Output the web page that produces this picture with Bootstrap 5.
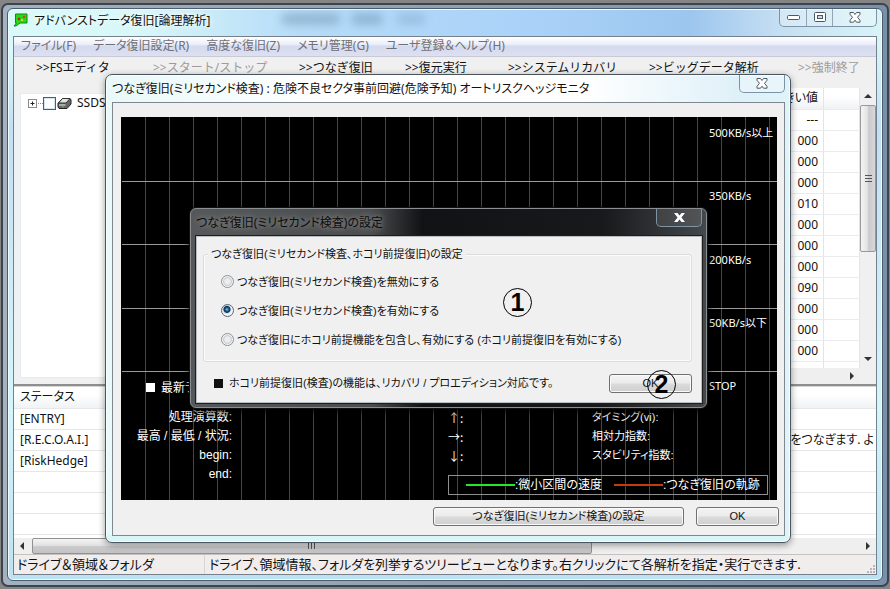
<!DOCTYPE html>
<html lang="ja">
<head>
<meta charset="utf-8">
<meta name="viewport" content="width=device-width, initial-scale=1">
<title>アドバンストデータ復旧[論理解析]</title>
<link rel="stylesheet" href="https://cdn.jsdelivr.net/npm/bootstrap@5.3.0/dist/css/bootstrap.min.css">
<style>
body{background:#858585;font:12px/20px "Noto Sans","Noto Sans CJK JP",sans-serif;font-feature-settings:"palt";color:#111;white-space:nowrap;overflow:hidden;padding:3px 1px 1px 1px}
.shell{background:linear-gradient(90deg,#a3b1c0,#8c9eb1 60%,#7990ab);border:2px solid #3c444d;border-radius:7px;padding:3px 4px 4px 4px}
.app-win{background:linear-gradient(180deg,transparent 40px,#c2dff3 120px,#d3f6fa 70%,#bce2f1),linear-gradient(90deg,#d9fafa,#d8f7f8 15%,#b6dcf8 33%,#a9d1f8 62%,#9cc6ee 78%,#c4def2 88%,#d9f4f7);border:1px solid #4d5c6b;box-shadow:inset 0 0 0 1px #eefcff;border-radius:6px;padding:0 5px 5px 5px}
.app-title{height:27px}
.app-title h1,.dlg-title h2{font-size:12px;line-height:20px;margin:0;font-weight:400}
.app-title h1{text-shadow:0 0 6px #fff,0 0 6px #fff;padding:2px 0 0 6px}
.smudge{width:145px;height:12px;margin-left:70px;border-radius:6px;background:linear-gradient(90deg,#31536f 0 55px,transparent 62px 68px,#31536f 74px 98px,transparent 104px 112px,#5d83a5 120px);filter:blur(4px);opacity:.25}
.caption-btns{border:1px solid #7d93a6;border-top:0;border-radius:0 0 5px 5px;height:18px;overflow:hidden;background:#ffffff44}
.caption-btns button{border:0;border-left:1px solid #8fa6b8;background:none;padding:0;width:26px;display:flex;align-items:center;justify-content:center}
.caption-btns button:first-child{border-left:0}
.caption-btns .close-cell{width:44px}
.client{background:#f0f0f0;border:1px solid #74818d}
.menu-strip{height:20px;background:linear-gradient(#fff 0,#eceffa 38%,#d6daee 48%,#dce0f2);border-bottom:1px solid #c8cbd6;padding-left:7px;gap:17px}
.menu-strip a{color:#6f7075;text-decoration:none;line-height:18px}
.tool-strip{height:31px;padding:1px 0 0 22px;display:grid;grid-template-columns:117fr 146fr 106fr 103fr 141fr 149fr 78fr}
.tool-strip button{border:0;background:none;padding:0;text-align:left;line-height:20px;height:20px;color:#111}
.tool-strip button:disabled{color:#9c9c9c}
.upper{height:296px}
.tree{background:#fff;width:45%;margin:5px 0 6px 6px;padding:3px 7px;border:1px solid #e3ebf5}
.tree-node{height:12px}
.tree input{appearance:none;width:13px;height:13px;border:1px solid #2c62a8;background:#fff;margin:0 1px 0 0;flex:none;box-shadow:inset 0 0 0 1px #d5e3f3}
.tree label{margin-left:5px}
.vals{background:#fff;border-collapse:collapse;width:100%}
.vals-box{flex:1 1 0;overflow:hidden}
.vals th,.vals td{font-weight:400;line-height:20px;height:21px;padding:0 5px 0 0;text-align:right;border-bottom:1px solid #e9ebee;border-right:1px solid #e1e4e8}
.vals thead th{background:linear-gradient(#fff 40%,#f0f1f3)}
.vals .rest{width:36px}
.vbar{width:16px;background:#f0f0f0;padding-bottom:16px}
.end-arrow{height:17px}
.thumb-v{height:147px;border:1px solid #989898;border-radius:2px;background:linear-gradient(90deg,#f4f4f4,#e3e3e3 45%,#cbcbcd 55%,#d7d7d9)}
.arrow{display:flex;align-items:center;justify-content:center}
.hbar{height:16px;background:#efefef}
.split{height:3px;background:#8e8e8e;border-bottom:1px solid #d6d6d6}
.log-box{background:#fff;padding-bottom:3px}
.log{border-collapse:collapse;width:100%}
.log th,.log td{font-weight:400;height:21px;line-height:20px;padding:0 2px 0 6px;border-bottom:1px solid #e7e7e7}
.log thead th{background:linear-gradient(#fff 35%,#f1f2f4)}
.thumb-h{margin-left:1px;flex:0 0 65%;border:1px solid #919191;border-radius:2px;background:linear-gradient(#f4f4f4,#e2e2e2 45%,#c9c9cb 55%,#c4c4c6)}
.status-strip{height:20px;background:#f2eded;border-top:1px solid #c5c1c1;line-height:18px;font-size:13px}
.status-strip .first{width:191px;padding-left:3px;border-right:1px solid #d9d5d5}

.dlg{position:absolute}
.dlg-monitor{left:105px;right:99px;top:74px;background:linear-gradient(90deg,#e9f8f8,#fff 30%,#fff 70%,#dff1f8 92%,#e0f3f8);border:1px solid #4b5560;border-radius:7px;padding:0 5px 6px 6px;box-shadow:0 2px 7px #0006,inset 0 0 0 1px #f4ffff,inset 0 -7px 0 #d9f5f7}
.dlg-title{height:27px}
.dlg-monitor .pane{background:#f0f0f0;border:1px solid #7d8890;padding:14px 7px 9px 8px}
.chart{background:linear-gradient(90deg,#454545 1px,transparent 1px) 23px 0/24px 100%,#000;border-left:1px solid #000;color:#fff;font-family:"Liberation Sans","Noto Sans CJK JP",sans-serif;padding-top:1px;height:383px}
.chart .band{height:64px;margin-bottom:-1px;border-bottom:1px solid #9a9a9a;padding-top:5px}
.chart .band:nth-child(even){margin-bottom:0}
.speed{width:68px;margin-left:auto;font-family:"Noto Sans","Noto Sans CJK JP",sans-serif;font-size:11px}
.latest{padding:6px 0 0 24px}
.latest i{width:9px;height:9px;background:#fff;display:inline-block;margin-right:6px}
.grid-info{display:grid;grid-template-columns:110px 216px 144px 1fr;line-height:19px;margin-top:10px}
.grid-info .side{font-size:11px}
.grid-info .dir{font-family:"Noto Sans CJK JP",sans-serif;font-feature-settings:normal}
.legend-box{border:1px solid #8f8f8f;height:20px;line-height:18px;margin:-9px 9px 0 auto;width:320px}
.legend-box i{width:49px;height:2px}
.legend-box .first-key{margin-left:17px}
.legend-box .next-key{margin-left:12px}
.dlg-actions{gap:12px;margin:7px -2px 0 0}
.win-btn{border:1px solid #707070;border-radius:3px;background:linear-gradient(#f4f4f4 0,#ebebeb 48%,#dbdbdb 52%,#cfcfcf);height:19px;padding:0;font:11px/17px "Liberation Sans","Noto Sans CJK JP",sans-serif;font-feature-settings:"palt";color:#111;box-shadow:inset 0 0 0 1px #fafafa}
.win-btn.wide{width:251px}
.win-btn.std{width:83px}
.dlg-setup{left:190px;right:183px;top:208px;background:linear-gradient(90deg,#55585a 0,#4a4c4d 35%,#101214 45%,#17191b 80%,#46494b);border:1px solid #8b8f92;border-radius:6px;padding:0 4px 4px 5px;box-shadow:0 0 0 1px #111,0 3px 8px #000}
.dlg-setup .caption-btns{background:#ffffff14}
.dlg-setup .dlg-title h2{text-shadow:0 0 5px #888,0 0 8px #888;color:#0c0c0c}
.dlg-setup .pane{background:#f0f0f0;border:1px solid #b9bdbf;outline:1px solid #1b1d1e;padding:6px 9px 9px 6px;font:11px/20px "Liberation Sans","Noto Sans CJK JP",sans-serif;font-feature-settings:"palt"}
.dlg-setup fieldset{border:1px solid #dcdcdc;border-radius:3px;box-shadow:inset 0 0 0 1px #fbfbfb;height:117px;margin-top:2px;padding:0 0 0 17px}
.dlg-setup legend{float:none;width:auto;font-size:11px;line-height:18px;margin:0 0 4px -13px;padding:0 3px;background:#f0f0f0}
.opt{height:29px;gap:3px}
.opt input{appearance:none;width:13px;height:13px;border:1px solid #8d9196;border-radius:50%;margin:0;background:radial-gradient(#ededed 35%,#c9cbcd 50%,#f5f5f5 65%)}
.opt input:checked{border-color:#56677b;background:radial-gradient(circle at 45% 40%,#6fd0f3 0,#17507f 2px,#102e50 3px,#cfdbe5 4px,#f2f5f7 5px)}
.setup-foot{margin:11px 0 0 11px}
.setup-foot i{width:9px;height:9px;background:#111;margin-right:6px}
.num{position:absolute;width:29px;height:29px;border:1px solid #000;border-radius:50%;font:700 25px/27px "Liberation Sans",sans-serif;text-align:center;color:#000;pointer-events:none}
.num-one{left:312px;top:79px}
.num-two{right:30px;bottom:8px}
</style>
<script src="https://cdn.jsdelivr.net/npm/bootstrap@5.3.0/dist/js/bootstrap.bundle.min.js"></script>
</head>
<body>
<div class="shell">
<main class="app-win">
  <header class="app-title d-flex">
    <svg width="15" height="14" viewBox="0 0 15 14" class="mt-1 flex-shrink-0" aria-hidden="true"><path d="M2.500 1h11.500v9H7l-4 3H1l2.500-3H2.500z" fill="#22dd18" stroke="#168712"/><circle cx="6" cy="6" r="1.400" fill="#d81c1c"/><circle cx="11" cy="4" r="1.300" fill="#e33a1c"/><circle cx="9" cy="7" r="1" fill="#ffe11a"/></svg>
    <h1>アドバンストデータ復旧[論理解析]</h1>
    <div class="smudge mt-1" aria-hidden="true"></div>
    <div class="caption-btns d-flex ms-auto">
      <button aria-label="最小化"><svg width="13" height="6"><rect x=".5" y=".5" width="12" height="4" rx="1" fill="#fff" stroke="#4c5865"/></svg></button>
      <button aria-label="最大化"><svg width="12" height="11"><rect x=".5" y=".5" width="11" height="9" rx="1" fill="#fff" stroke="#4c5865"/><rect x="3.500" y="3.500" width="5" height="3" fill="#cde" stroke="#4c5865"/></svg></button>
      <button class="close-cell" aria-label="閉じる"><svg width="12" height="11" viewBox="0 0 12 11"><path d="M1 .5h3.500L6 2.500 7.500.5H11v1.800L8.500 5.300 11 8.300v1.900H7.500L6 8.200l-1.500 2H1V8.300l2.500-3L1 2.300z" fill="#fff" stroke="#4c5865"/></svg></button>
    </div>
  </header>
  <div class="client">
    <nav class="menu-strip d-flex">
      <a href="#">ファイル(F)</a><a href="#">データ復旧設定(R)</a><a href="#">高度な復旧(Z)</a><a href="#">メモリ管理(G)</a><a href="#">ユーザ登録＆ヘルプ(H)</a>
    </nav>
    <div class="tool-strip">
      <button>&gt;&gt;FSエディタ</button><button disabled>&gt;&gt;スタート/ストップ</button><button>&gt;&gt;つなぎ復旧</button><button>&gt;&gt;復元実行</button><button>&gt;&gt;システムリカバリ</button><button>&gt;&gt;ビッグデータ解析</button><button disabled>&gt;&gt;強制終了</button>
    </div>
    <div class="upper d-flex">
      <div class="tree d-flex align-items-start">
        <div class="tree-node d-flex align-items-center">
          <svg width="15" height="9" aria-hidden="true" class="flex-shrink-0"><rect x=".5" y=".5" width="8" height="8" fill="#fff" stroke="#8b8b8b"/><path d="M2.500 4.500h4M4.500 2.500v4" stroke="#222"/><path d="M10 4.500h5" stroke="#888" stroke-dasharray="1 1"/></svg>
          <input type="checkbox" id="drive">
          <svg width="15" height="13" viewBox="0 0 15 13" aria-hidden="true" class="flex-shrink-0"><path d="M5.500 1.500h7l1.500 1V7l-4 4.500H2L1 10V6z" fill="#666" stroke="#222"/><path d="M5.500 1.500h7.500L9 6H1.500z" fill="#e4e4e4" stroke="#333"/><path d="M2 8h6.500" stroke="#eee"/><path d="M5 10h2" stroke="#4c4"/></svg>
          <label for="drive">SSDS</label>
        </div>
      </div>
      <div class="flex-grow-1 d-flex flex-column">
        <div class="vals-box">
        <table class="vals">
          <thead><tr><th>しきい値</th><th class="rest"></th></tr></thead>
          <tbody>
            <tr><td>---</td><td></td></tr><tr><td>000</td><td></td></tr><tr><td>000</td><td></td></tr><tr><td>000</td><td></td></tr><tr><td>010</td><td></td></tr><tr><td>000</td><td></td></tr><tr><td>000</td><td></td></tr><tr><td>000</td><td></td></tr><tr><td>090</td><td></td></tr><tr><td>000</td><td></td></tr><tr><td>000</td><td></td></tr><tr><td>000</td><td></td></tr><tr><td></td><td></td></tr>
          </tbody>
        </table>
        </div>
        <div class="hbar d-flex justify-content-end pe-1"><span class="arrow"><svg width="8" height="8"><path d="M2 0l4 4-4 4z" fill="#333"/></svg></span></div>
      </div>
      <div class="vbar d-flex flex-column">
        <div class="arrow end-arrow"><svg width="8" height="5"><path d="M0 4l4-4 4 4z" fill="#333"/></svg></div>
        <div class="arrow thumb-v"><svg width="7" height="8"><path d="M0 .5h7M0 3.500h7M0 6.500h7" stroke="#555"/></svg></div>
        <div class="arrow end-arrow mt-auto"><svg width="8" height="5"><path d="M0 0l4 4 4-4z" fill="#333"/></svg></div>
      </div>
    </div>
    <div class="split"></div>
    <div class="log-box">
    <table class="log">
      <thead><tr><th>ステータス</th><th></th></tr></thead>
      <tbody>
        <tr><td>[ENTRY]</td><td></td></tr>
        <tr><td>[R.E.C.O.A.I.]</td><td class="text-end">をつなぎます. よ</td></tr>
        <tr><td>[RiskHedge]</td><td></td></tr>
        <tr><td></td><td></td></tr><tr><td></td><td></td></tr><tr><td></td><td></td></tr>
      </tbody>
    </table>
    </div>
    <div class="hbar d-flex">
      <span class="arrow px-1"><svg width="9" height="8"><path d="M6 0L2 4l4 4z" fill="#333"/></svg></span>
      <div class="thumb-h arrow"><svg width="8" height="7"><path d="M.5 0v7M3.500 0v7M6.500 0v7" stroke="#555"/></svg></div>
      <span class="arrow ms-auto px-1"><svg width="8" height="8"><path d="M2 0l4 4-4 4z" fill="#333"/></svg></span>
    </div>
    <footer class="status-strip d-flex">
      <span class="first">ドライブ＆領域＆フォルダ</span>
      <span class="ps-1">ドライブ、領域情報、フォルダを列挙するツリービューとなります。右クリックにて各解析を指定・実行できます.</span>
      <svg width="10" height="10" class="ms-auto align-self-end" aria-hidden="true"><path d="M7 1h2v2H7zM4 4h2v2H4zM7 4h2v2H7zM1 7h2v2H1zM4 7h2v2H4zM7 7h2v2H7z" fill="#bbb5b5"/></svg>
    </footer>
  </div>
</main>
</div>

<section class="dlg dlg-monitor" role="dialog" aria-labelledby="t1">
  <header class="dlg-title d-flex">
    <h2 id="t1" class="pt-1">つなぎ復旧(ミリセカンド検査) : 危険不良セクタ事前回避(危険予知) オートリスクヘッジモニタ</h2>
    <div class="caption-btns d-flex ms-auto"><button class="close-cell" aria-label="閉じる"><svg width="12" height="11" viewBox="0 0 12 11"><path d="M1 .5h3.500L6 2.500 7.500.5H11v1.800L8.500 5.300 11 8.300v1.900H7.500L6 8.200l-1.500 2H1V8.300l2.500-3L1 2.300z" fill="#fff" stroke="#4c5865"/></svg></button></div>
  </header>
  <div class="pane">
    <div class="chart">
      <div class="band"><div class="speed">500KB/s以上</div></div>
      <div class="band"><div class="speed">350KB/s</div></div>
      <div class="band"><div class="speed">200KB/s</div></div>
      <div class="band"><div class="speed">50KB/s以下</div></div>
      <div class="d-flex"><span class="latest"><i></i>最新ライン</span><div class="speed pt-1">STOP</div></div>
      <div class="grid-info">
        <span class="text-end">処理演算数:</span><span></span><span class="dir">↑:</span><span class="side">タイミング(vi):</span>
        <span class="text-end">最高 / 最低 / 状況:</span><span></span><span class="dir">→:</span><span class="side">相対力指数:</span>
        <span class="text-end">begin:</span><span></span><span class="dir">↓:</span><span class="side">スタビリティ指数:</span>
        <span class="text-end">end:</span>
      </div>
      <div class="legend-box d-flex align-items-center"><i class="first-key" style="background:#26e626"></i><span>:微小区間の速度</span><i class="next-key" style="background:#c23a10"></i><span>:つなぎ復旧の軌跡</span></div>
    </div>
    <div class="dlg-actions d-flex justify-content-end">
      <button class="win-btn wide">つなぎ復旧(ミリセカンド検査)の設定</button>
      <button class="win-btn std">OK</button>
    </div>
  </div>
</section>

<section class="dlg dlg-setup" role="dialog" aria-labelledby="t2">
  <header class="dlg-title d-flex">
    <h2 id="t2" class="pt-1">つなぎ復旧(ミリセカンド検査)の設定</h2>
    <div class="caption-btns d-flex ms-auto"><button class="close-cell" aria-label="閉じる"><svg width="11" height="9" viewBox="0 0 11 9"><path d="M0 0h3.500l2 2.500L7.500 0H11L7.400 4.500 11 9H7.500l-2-2.500L3.500 9H0l3.600-4.500z" fill="#fff"/></svg></button></div>
  </header>
  <div class="pane">
    <fieldset>
      <legend>つなぎ復旧(ミリセカンド検査、ホコリ前提復旧)の設定</legend>
      <div class="opt d-flex align-items-center"><input type="radio" name="mode" id="m1"><label for="m1">つなぎ復旧(ミリセカンド検査)を無効にする</label></div>
      <div class="opt d-flex align-items-center"><input type="radio" name="mode" id="m2" checked><label for="m2">つなぎ復旧(ミリセカンド検査)を有効にする</label></div>
      <div class="opt d-flex align-items-center"><input type="radio" name="mode" id="m3"><label for="m3">つなぎ復旧にホコリ前提機能を包含し、有効にする (ホコリ前提復旧を有効にする)</label></div>
    </fieldset>
    <div class="setup-foot d-flex align-items-center">
      <i></i><span>ホコリ前提復旧(検査)の機能は、リカバリ / プロエディション対応です。</span>
      <button class="win-btn std ms-auto">OK</button>
    </div>
  </div>
  <span class="num num-one">1</span>
  <span class="num num-two">2</span>
</section>
</body>
</html>
